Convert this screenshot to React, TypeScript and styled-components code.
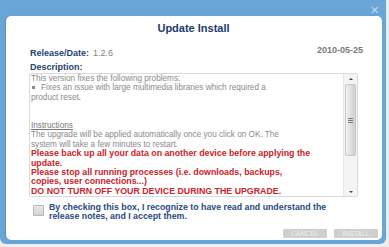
import React from "react";
import styled, { createGlobalStyle } from "styled-components";

const GlobalStyle = createGlobalStyle`
  html, body {
    margin: 0;
    padding: 0;
    background: #eeeeee;
    font-family: "Liberation Sans", Arial, sans-serif;
  }
`;

const Frame = styled.div`
  width: 386px;
  height: 244px;
  box-sizing: border-box;
  background: #6aa5d8;
  border-radius: 0 0 6px 6px;
  padding: 16px 4px 4px 6px;
  position: relative;
`;

const Close = styled.span`
  position: absolute;
  top: 5px;
  right: 7px;
  color: #c4d8ea;
  font-size: 11px;
  line-height: 11px;
`;

const Panel = styled.div`
  height: 100%;
  box-sizing: border-box;
  background: #ffffff;
  border-radius: 5px;
  padding: 5px 24px 0 23px;
  display: flex;
  flex-direction: column;
  box-shadow: -1px 0 1px rgba(0, 0, 0, 0.15);
`;

const Title = styled.h1`
  margin: 0;
  text-align: center;
  font-size: 11px;
  line-height: 14px;
  color: #1c3a6e;
  font-weight: bold;
`;

const Meta = styled.div`
  display: flex;
  justify-content: space-between;
  align-items: flex-start;
  margin: 10px -5px 0 1px;
  line-height: 11px;
`;

const Label = styled.span`
  display: block;
  font-size: 9px;
  line-height: 11px;
  font-weight: bold;
  color: #1f3f73;
`;

const Release = styled(Label)`
  margin-top: 3px;
`;

const Value = styled.span`
  font-size: 9px;
  color: #808080;
  font-weight: normal;
  margin-left: 4px;
`;

const DateText = styled.span`
  display: block;
  font-size: 9px;
  line-height: 11px;
  font-weight: bold;
  color: #7a7a7a;
`;

const DescLabel = styled(Label)`
  margin: 3px 0 0 1px;
`;

const NotesBox = styled.div`
  height: 124px;
  box-sizing: border-box;
  border: 1px solid #dadada;
  border-radius: 2px;
  display: flex;
  overflow: hidden;
`;

const Notes = styled.div`
  flex: 1;
  padding: 0 0 0 1px;
  font-size: 8.2px;
  line-height: 9.4px;
  color: #8a8a8a;
  overflow: hidden;
`;

const Line = styled.div<{ $red?: boolean }>`
  white-space: nowrap;
  color: ${(p) => (p.$red ? "#cc2229" : "inherit")};
  font-weight: ${(p) => (p.$red ? "bold" : "normal")};
  font-size: ${(p) => (p.$red ? "8.8px" : "inherit")};
`;

const Blank = styled.div`
  height: 18.8px;
`;

const Bullet = styled.span`
  display: inline-block;
  width: 3px;
  height: 3px;
  background: #8a8a8a;
  margin: 0 6px 1px 1px;
`;

const Heading = styled.div`
  text-decoration: underline;
  color: #777777;
`;

const Scrollbar = styled.div`
  width: 13px;
  border-left: 1px solid #e6e6e6;
  background: #f4f4f4;
  display: flex;
  flex-direction: column;
  align-items: center;
`;

const Arrow = styled.div<{ $down?: boolean }>`
  height: 9px;
  width: 100%;
  display: flex;
  align-items: center;
  justify-content: center;
  &::after {
    content: "";
    border-left: 2px solid transparent;
    border-right: 2px solid transparent;
    ${(p) =>
      p.$down ? "border-top: 2px solid #444;" : "border-bottom: 2px solid #444;"}
  }
`;

const Track = styled.div`
  flex: 1;
  width: 100%;
  display: flex;
  flex-direction: column;
`;

const Thumb = styled.div`
  height: 70px;
  margin: 1px 1px 0;
  border: 1px solid #c8c8c8;
  border-radius: 2px;
  background: linear-gradient(to right, #f2f2f2, #dcdcdc 60%, #d0d0d0);
  display: flex;
  align-items: center;
  justify-content: center;
`;

const Grip = styled.div`
  width: 5px;
  height: 5px;
  background: repeating-linear-gradient(
    to bottom,
    #777 0,
    #777 1px,
    transparent 1px,
    transparent 2px
  );
`;

const Agree = styled.label`
  display: flex;
  align-items: flex-start;
  margin: 6px 0 0 4px;
  gap: 5px;
`;

const Box = styled.span`
  width: 9px;
  height: 9px;
  flex: none;
  margin-top: 2px;
  border: 1px solid #b8b8b8;
  border-radius: 1px;
  background: linear-gradient(#e8e8e8, #d4d4d4);
`;

const AgreeText = styled.span`
  font-size: 8.8px;
  line-height: 9px;
  font-weight: bold;
  color: #2a4a80;
`;

const Buttons = styled.div`
  display: flex;
  justify-content: flex-end;
  gap: 7px;
  margin: 8px -20px 0 0;
`;

const Button = styled.button`
  width: 44px;
  height: 9px;
  padding: 0;
  border: none;
  border-radius: 1px;
  background: #cfcfcf;
  color: #f0f0f0;
  font-family: "Liberation Sans", Arial, sans-serif;
  font-size: 6.5px;
  line-height: 9px;
  letter-spacing: 0.2px;
`;

export default function App() {
  return (
    <>
      <GlobalStyle />
      <Frame>
        <Close>✕</Close>
        <Panel>
          <Title>Update Install</Title>
          <Meta>
            <Release>
              Release/Date:<Value>1.2.6</Value>
            </Release>
            <DateText>2010-05-25</DateText>
          </Meta>
          <DescLabel>Description:</DescLabel>
          <NotesBox>
            <Notes>
              <Line>This version fixes the following problems:</Line>
              <Line>
                <Bullet />
                Fixes an issue with large multimedia libraries which required a
              </Line>
              <Line>product reset.</Line>
              <Blank />
              <Heading>Instructions</Heading>
              <Line>The upgrade will be applied automatically once you click on OK. The</Line>
              <Line>system will take a few minutes to restart.</Line>
              <Line $red>Please back up all your data on another device before applying the</Line>
              <Line $red>update.</Line>
              <Line $red>Please stop all running processes (i.e. downloads, backups,</Line>
              <Line $red>copies, user connections...)</Line>
              <Line $red>DO NOT TURN OFF YOUR DEVICE DURING THE UPGRADE.</Line>
            </Notes>
            <Scrollbar>
              <Arrow />
              <Track>
                <Thumb>
                  <Grip />
                </Thumb>
              </Track>
              <Arrow $down />
            </Scrollbar>
          </NotesBox>
          <Agree>
            <Box />
            <AgreeText>
              By checking this box, I recognize to have read and understand the
              <br />
              release notes, and I accept them.
            </AgreeText>
          </Agree>
          <Buttons>
            <Button>CANCEL</Button>
            <Button>INSTALL</Button>
          </Buttons>
        </Panel>
      </Frame>
    </>
  );
}
